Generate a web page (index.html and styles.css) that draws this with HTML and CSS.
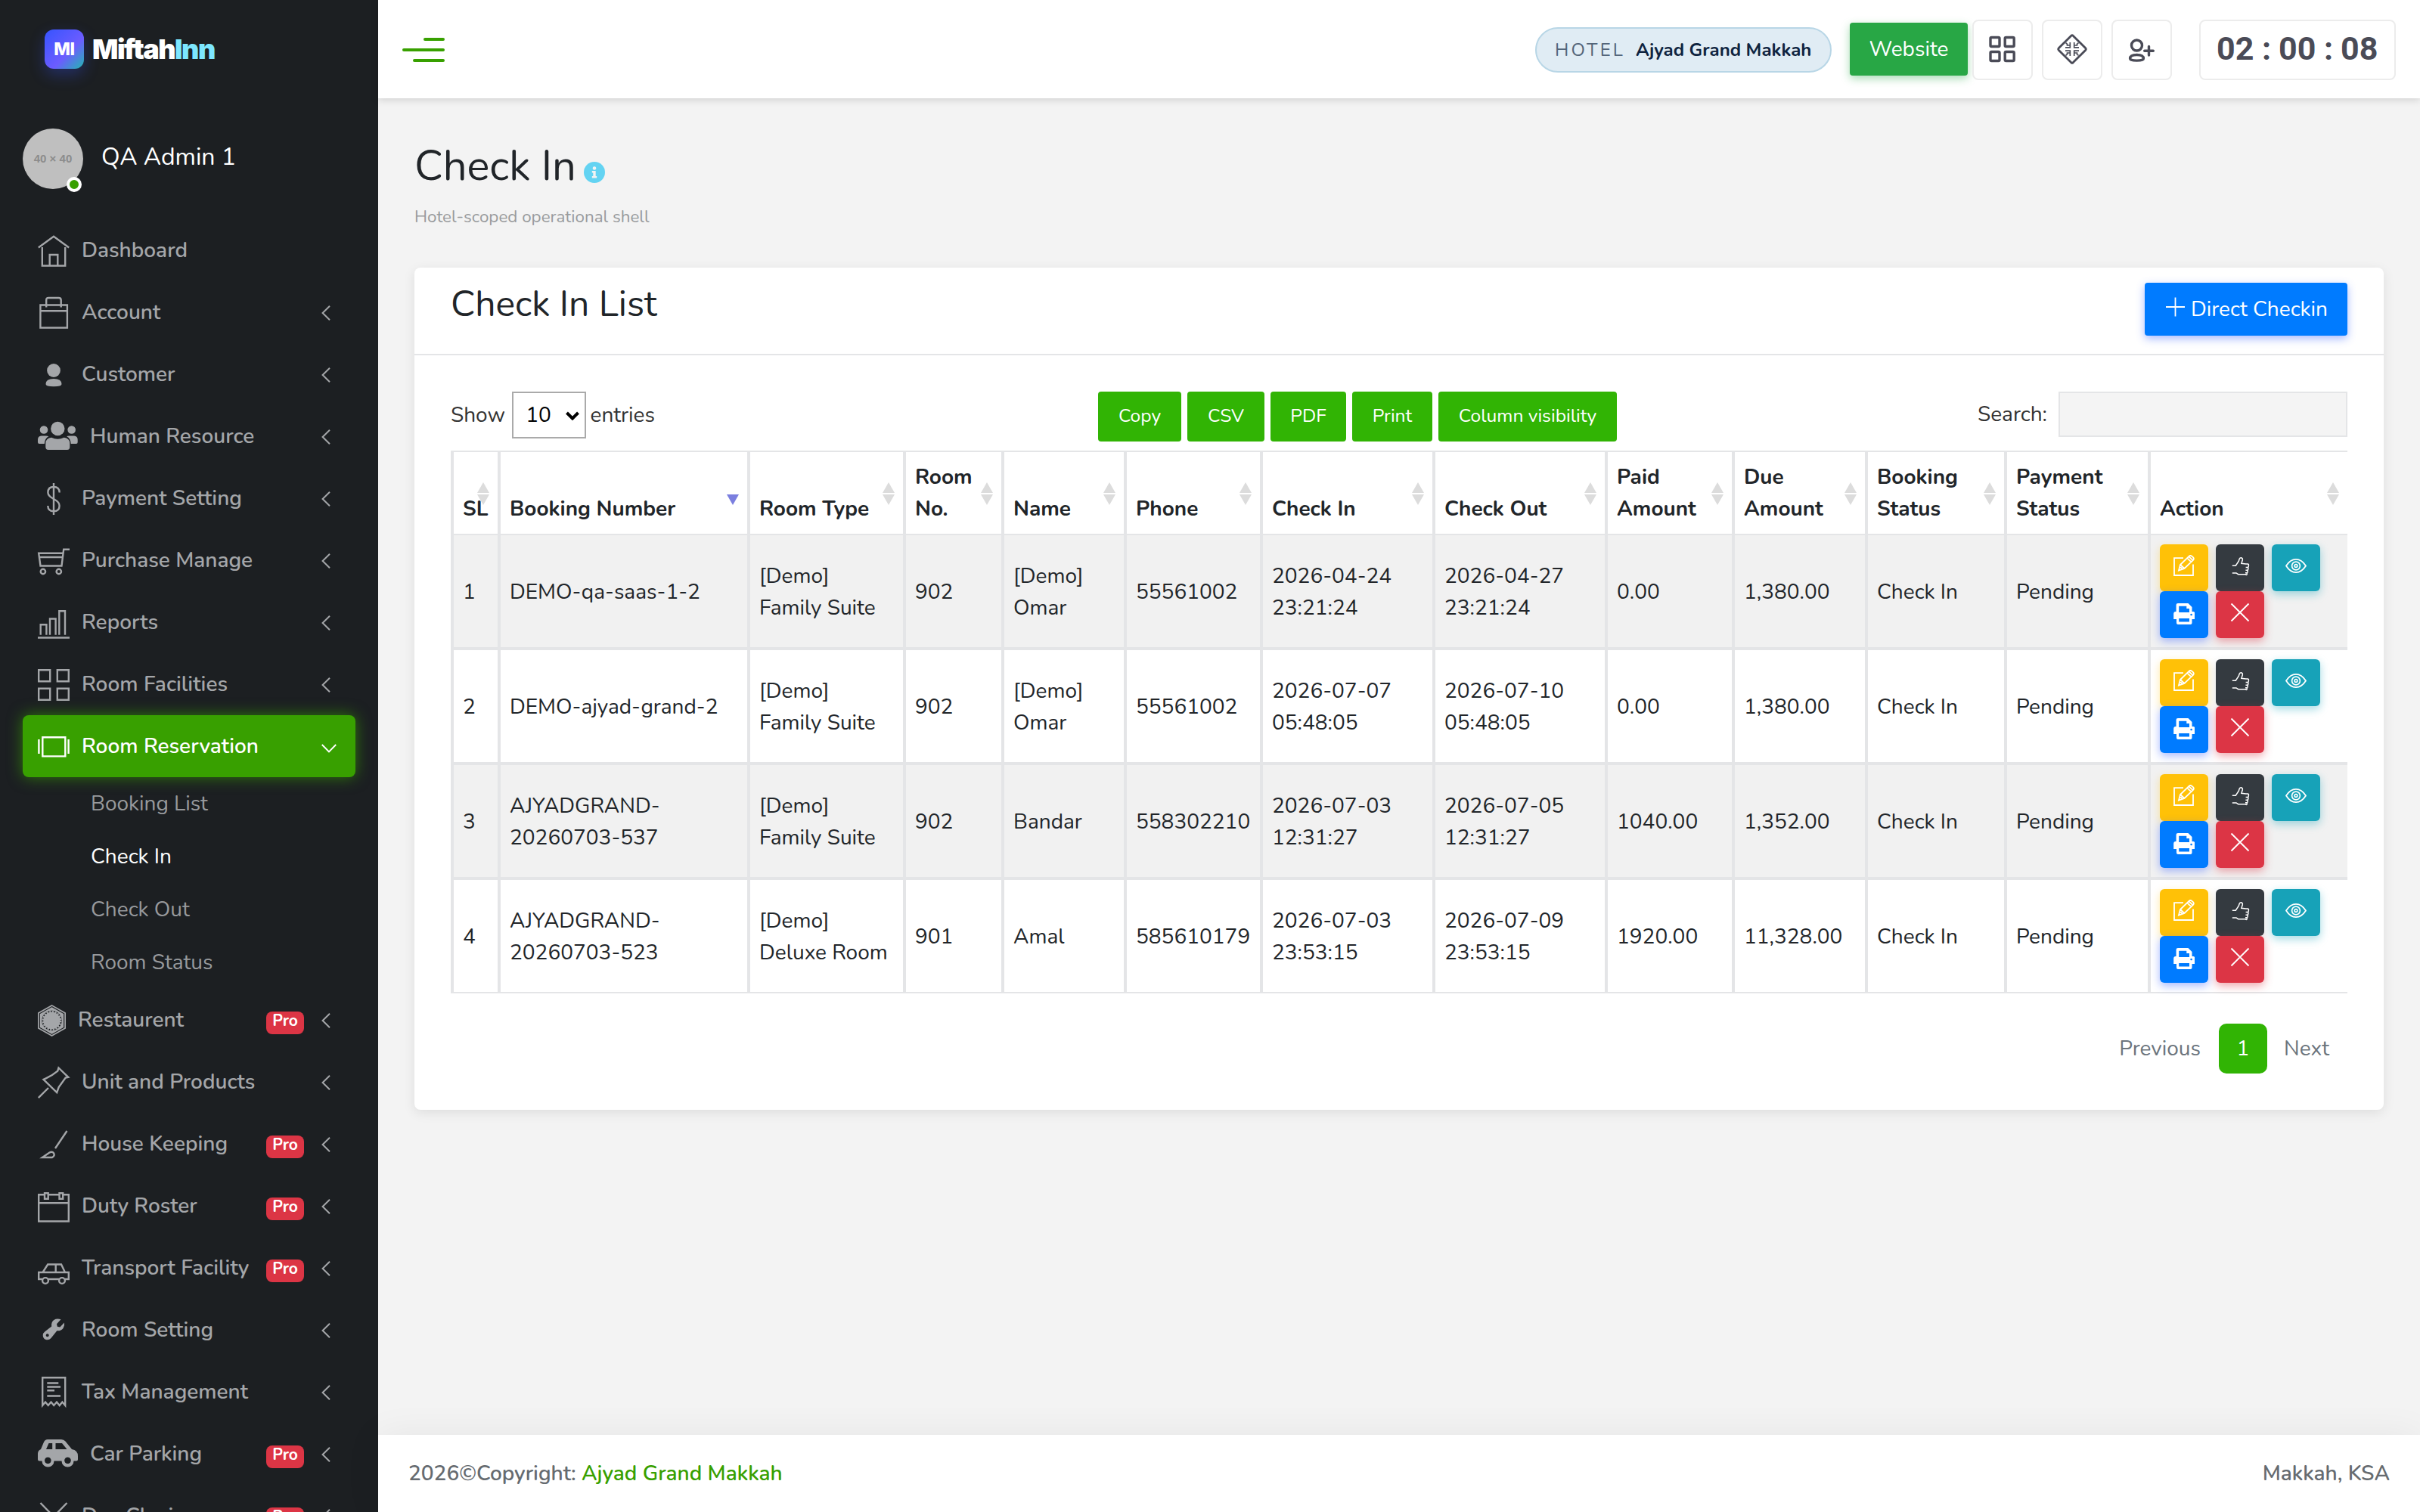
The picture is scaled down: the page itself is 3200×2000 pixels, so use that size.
FILE: index.html
```
<!DOCTYPE html>
<html lang="en">
<head>
<meta charset="utf-8">
<title>Check In</title>
<link rel="stylesheet" href="styles.css">
</head>
<body>
<svg class="sprite" aria-hidden="true">
  <symbol id="chev" viewBox="0 0 12 20"><path d="M11 .8 1.6 10 11 19.2" fill="none" stroke="currentColor" stroke-width="2"/></symbol>
  <symbol id="edit" viewBox="0 0 28 28"><path d="M13 4.2H1V27h25V12.500" fill="none" stroke="currentColor" stroke-width="1.800"/><path d="m7 20.500 2-7.500L20.500 1.800q1.700-1.500 3.600-.2l1.800 1.600q1.700 1.700.3 3.500L14.500 18zM9 13l5.500 5M18 4.200l5.500 5.200M20.500 2.300l5.300 5M8.500 15.500l3.500 3.300" fill="none" stroke="currentColor" stroke-width="1.800"/></symbol>
  <symbol id="thumb" viewBox="0 0 28 28"><path d="M3 14.500h4.500q2-3 4-6l.8-2.600Q13 4 14.700 4q2.300.3 1.800 3l-1.400 4.600 6 .6h2.200q1.800.3 1.300 2l-.2 1.600q0 1-1 1h-2.600m2.400 0q1.200.5.900 2t-1.100 1.800h-2.400m2 0q1.200.5.8 2t-1 1.500h-2.200m1.700 0q.8.500.5 1.900T20.200 26H10.800L8.200 24.200H3" fill="none" stroke="currentColor" stroke-width="1.500" transform="translate(.8 -.3)"/></symbol>
  <symbol id="eye" viewBox="0 0 28 28"><path d="M1 14.500Q6.500 5.900 14 5.900T27 14.500Q21.500 23.100 14 23.100T1 14.500z" fill="none" stroke="currentColor" stroke-width="1.800"/><circle cx="14" cy="14.500" r="5.400" fill="none" stroke="currentColor" stroke-width="1.700"/><circle cx="14" cy="14.500" r="1.900" fill="none" stroke="currentColor" stroke-width="1.600"/></symbol>
  <symbol id="print" viewBox="0 0 28 28"><path fill="currentColor" fill-rule="evenodd" d="M6 0h13.500L24.500 5v6H26q2.500.2 2.500 3v7h-4v5q0 2-2 2H6q-2 0-2-2v-5H.2v-7q0-3 2.800-3h.6V2Q3.600 0 6 0zM7.200 3.800V12H21V7h-3.700V3.800zM7.200 20v4.500H21V20zM23.600 13.700a1.300 1.300 0 1 0 .01 0z"/></symbol>
  <symbol id="cross" viewBox="0 0 28 28"><path d="M2.500 2.500l23 23m0-23-23 23" fill="none" stroke="currentColor" stroke-width="1.900"/></symbol>
  <symbol id="sort" viewBox="0 0 16 30"><path d="M8 0l8 14H0zM0 16h16L8 30z" fill="currentColor"/></symbol>
</svg>

<div class="app">
  <aside class="sidebar">
    <div class="brand">
      <span class="brand-mark">MI</span>
      <span class="brand-name">Miftah<span class="brand-accent">Inn</span></span>
    </div>
    <div class="profile">
      <div class="avatar"><span class="avatar-text">40 × 40</span><span class="status"></span></div>
      <span class="profile-name">QA Admin 1</span>
    </div>
    <nav class="menu">
      <a class="item"><svg class="ico" viewBox="0 0 42 42"><path d="M.8 16.500 21 1.800l20.200 14.700M5.800 16v24.500h30.400V16M15.700 40V26h10.600v14"/></svg>Dashboard</a>
      <a class="item"><svg class="ico" viewBox="0 0 42 42"><path d="M3.400 10.500h35.500v30H3.400zM3.400 18.300h35.500M11.200 13.500V4q0-3 3-3h13.500q3 0 3 3v9.500"/></svg>Account<svg class="chev"><use href="#chev"/></svg></a>
      <a class="item"><svg class="ico solid" viewBox="0 0 42 42"><circle cx="21" cy="15" r="8.900"/><path d="M10.500 33q0-7 10.500-7t10.500 7q0 3.300-10.500 3.300T10.500 33z"/></svg>Customer<svg class="chev"><use href="#chev"/></svg></a>
      <a class="item"><svg class="ico wide solid" viewBox="0 0 53 42"><circle cx="26.300" cy="10" r="9.200"/><circle cx="8" cy="11.500" r="5.300"/><circle cx="44.700" cy="11.500" r="5.300"/><path d="M18 21.800q8.300 4 16.600 0 7.700.8 7.700 8v4.500q0 3.700-3.500 3.700h-25q-3.500 0-3.500-3.700v-4.500q0-7.200 7.700-8zM4.500 19.500H11q2.200 0 3.300.8-5 2.500-5.500 9.700H2q-2 0-2-2v-3.500q0-4.500 4.500-5zM48 19.500h-6.500q-2.200 0-3.300.8 5 2.500 5.500 9.700h7q2 0 2-2v-3.500q0-4.500-4.700-5z"/></svg>Human Resource<svg class="chev"><use href="#chev"/></svg></a>
      <a class="item"><svg class="ico" viewBox="0 0 42 42"><path d="M21 0v42M28.700 12.500Q28.500 5 21 5t-7.600 7.300q0 4.500 6 7.700l3.200 2q6 3.300 6 8 0 7.300-7.600 7.300T13.300 30"/></svg>Payment Setting<svg class="chev"><use href="#chev"/></svg></a>
      <a class="item"><svg class="ico" viewBox="0 0 42 42"><path d="M42 5.700h-7.800L31.500 27.500h-28L1.200 10.800H33M2.200 16h30"/><circle cx="6.900" cy="35" r="3.200"/><circle cx="27.800" cy="35" r="3.200"/></svg>Purchase Manage<svg class="chev"><use href="#chev"/></svg></a>
      <a class="item"><svg class="ico" viewBox="0 0 42 42"><path d="M0 40.500h42M3.700 36.700V23.200h7.700v13.500M16 36.700V15.500h7.600v21.200M28.300 36.700V5.200H36v31.500"/></svg>Reports<svg class="chev"><use href="#chev"/></svg></a>
      <a class="item"><svg class="ico" viewBox="0 0 42 42"><path d="M1.200 1.200h15v15h-15zM25.800 1.200h15v15h-15zM1.200 25.800h15v15h-15zM25.800 25.800h15v15h-15z"/></svg>Room Facilities<svg class="chev"><use href="#chev"/></svg></a>
      <a class="item active"><svg class="ico" viewBox="0 0 42 42"><path d="M6.300 8.200h30v25.200h-30zM1.400 11v19M40.600 11v19"/></svg>Room Reservation<svg class="chev"><use href="#chev"/></svg></a>
      <div class="submenu">
        <a class="subitem">Booking List</a>
        <a class="subitem current">Check In</a>
        <a class="subitem">Check Out</a>
        <a class="subitem">Room Status</a>
      </div>
      <a class="item"><svg class="ico hex" viewBox="0 0 37 42"><path class="fill" d="M18.500 0 37 10.500v21L18.500 42 0 31.500v-21z"/><path class="cut" d="M18.500 2.600 34.700 11.800v18.400l-16.200 9.200L2.300 30.200V11.800z"/><circle class="cut" cx="18.500" cy="21" r="13.200"/><circle class="ring" cx="18.500" cy="21" r="11.200"/></svg>Restaurent<span class="pro">Pro</span><svg class="chev"><use href="#chev"/></svg></a>
      <a class="item"><svg class="ico" viewBox="0 0 42 42"><path d="M.8 41.200 14 28M27.500 1.500 40.300 13.800l-3.600.8-9 12.500-2.500 7L7.500 16.800l3.300-1.500Q20 11 26.300 5.600z"/></svg>Unit and Products<svg class="chev"><use href="#chev"/></svg></a>
      <a class="item"><svg class="ico" viewBox="0 0 42 42"><path d="M38.500 3 23 26M6 38l9.500-6.500q3.500-2 5.500.8 2 3.500-2 5.700z"/></svg>House Keeping<span class="pro">Pro</span><svg class="chev"><use href="#chev"/></svg></a>
      <a class="item"><svg class="ico" viewBox="0 0 42 42"><path d="M8 5.200H1.200v35.300h39.600V5.200H34M14.500 5.200h13M1.200 16.300h39.600M9 3.200h4.700v7.500H9zM28.500 3.200h4.700v7.500h-4.700z"/></svg>Duty Roster<span class="pro">Pro</span><svg class="chev"><use href="#chev"/></svg></a>
      <a class="item"><svg class="ico" viewBox="0 0 42 42"><path d="M6 35H1.200V26h39.600v9H36M14 35h14M6.500 26l6.700-10.500H31L36 26M23.700 15.500V26"/><circle cx="10" cy="37" r="3.900"/><circle cx="32" cy="37" r="3.900"/></svg>Transport Facility<span class="pro">Pro</span><svg class="chev"><use href="#chev"/></svg></a>
      <a class="item"><svg class="ico solid" viewBox="0 0 42 42"><path fill-rule="evenodd" d="M30.500 6.200 25 12.300l.8 3.400 3.500.8 5.700-6q.8 4-1.500 7.500-3 3.800-8.200 3.300L17.500 31q-2.800 3-6.800 2-4-1.500-4-5.800.2-3 2.500-4.700l9-7Q17.500 9.500 21.300 7t9.200-.8zM12.700 25.300a2 2 0 1 0 .01 0z"/></svg>Room Setting<svg class="chev"><use href="#chev"/></svg></a>
      <a class="item"><svg class="ico" viewBox="0 0 42 42"><path d="M6.200 38V1.200h30V38l-3.800-4.500-3.700 4.500-3.700-4.500-3.800 4.500-3.700-4.500-3.800 4.500-3.700-4.500zM12.300 8.500h15M12.300 13.500H30M12.300 18.300H22M12.300 25.500H30"/></svg>Tax Management<svg class="chev"><use href="#chev"/></svg></a>
      <a class="item"><svg class="ico wide solid" viewBox="0 0 53 42"><path fill-rule="evenodd" d="M13 1h18q3.500 0 5.500 2.500L45 14q8 1.300 8 9v4.500q0 2-2 2h-3.500a8 8 0 0 1-16 0h-10a8 8 0 0 1-16 0H2q-2 0-2-2V20q0-4.500 4-6l4-9.500Q9.500 1 13 1zM14.500 6 11 14h8.200V6zm9 0v8h15L32 6zM13.300 24.500a4.300 4.300 0 1 0 .01 0zM39.500 24.500a4.300 4.300 0 1 0 .01 0z"/></svg>Car Parking<span class="pro">Pro</span><svg class="chev"><use href="#chev"/></svg></a>
      <a class="item"><svg class="ico" viewBox="0 0 42 42"><path d="m3.500 3 35 36M38.500 3l-35 36"/></svg>Day Closing<span class="pro">Pro</span><svg class="chev"><use href="#chev"/></svg></a>
    </nav>
  </aside>

  <div class="page">
    <header class="topbar">
      <div class="burger"><span class="short"></span><span></span><span class="mid"></span></div>
      <div class="tools">
        <div class="hotel"><span class="hotel-label">HOTEL</span><span class="hotel-name">Ajyad Grand Makkah</span></div>
        <a class="website">Website</a>
        <a class="tool"><svg viewBox="0 0 40 40"><path d="M5.500 4.500h9q1.500 0 1.500 1.500v9q0 1.500-1.500 1.500h-9Q4 16.500 4 15V6q0-1.500 1.500-1.500zM24.700 4.500h9q1.500 0 1.500 1.500v9q0 1.500-1.500 1.500h-9q-1.500 0-1.500-1.500V6q0-1.500 1.500-1.500zM5.500 23.500h9q1.500 0 1.500 1.500v9q0 1.500-1.500 1.500h-9Q4 35.500 4 34v-9q0-1.500 1.500-1.500zM24.700 23.500h9q1.500 0 1.500 1.500v9q0 1.500-1.500 1.500h-9q-1.500 0-1.500-1.500v-9q0-1.500 1.500-1.500z" stroke-width="3.400"/></svg></a>
        <a class="tool"><svg viewBox="0 0 40 40"><path d="M18.800 2.200q1.200-1 2.400 0l16.600 16.600q1 1.200 0 2.400L21.200 37.800q-1.200 1-2.400 0L2.200 21.200q-1-1.200 0-2.400z" stroke-width="2.800"/><path d="M17.300 11v6.800H11M17 15h-3.500v-2.500M22.700 11v6.800H29M23 15h3.500v-2.500M17.300 29v-6.800H11M17 25h-3.500v2.500M22.700 29v-6.800H29M23 25h3.500v2.500M11.500 11.500l2.500 2.500M28.500 11.500 26 14M11.500 28.500 14 26M28.500 28.500 26 26" stroke-width="1.700"/></svg></a>
        <a class="tool"><svg viewBox="0 0 40 40"><circle cx="13.500" cy="15" r="7" stroke-width="3.400"/><path d="M4.600 32.500q0-5 8.900-5t8.900 5q0 2.600-8.900 2.600t-8.900-2.600zM29.500 16.500v11.600M23.700 22.300h11.600" stroke-width="3.400" stroke-linecap="round"/></svg></a>
        <div class="clock"><span class="num">02</span><span class="colon">:</span><span class="num">00</span><span class="colon">:</span><span class="num">08</span></div>
      </div>
    </header>

    <main class="content">
      <h1 class="title">Check In
        <svg class="info" viewBox="0 0 28 28"><circle cx="14" cy="14" r="14" fill="#63d3f2"/><path d="M14 6.200a2.300 2.300 0 1 1-.01 0zM10.800 12h4.900v7h1.500v2.400h-6.400V19h1.500v-4.600h-1.500z" fill="#f3f3f3"/></svg>
      </h1>
      <p class="subtitle">Hotel-scoped operational shell</p>

      <section class="card">
        <div class="card-head">
          <h2 class="card-title">Check In List</h2>
          <a class="direct"><svg viewBox="0 0 25 26"><path d="M12.500 .5v25M0 13h25" fill="none" stroke="currentColor" stroke-width="1.800"/></svg>Direct Checkin</a>
        </div>
        <div class="card-body">
          <div class="controls">
            <div class="length">Show <span class="select">10<svg viewBox="0 0 18 12"><path d="M1.500 2 9 9.500 16.500 2" fill="none" stroke="currentColor" stroke-width="4"/></svg></span> entries</div>
            <div class="exports"><a class="w-copy">Copy</a><a class="w-csv">CSV</a><a class="w-pdf">PDF</a><a class="w-print">Print</a><a class="w-cols">Column visibility</a></div>
            <label class="search">Search:<input type="text" aria-label="Search"></label>
          </div>
          <table class="grid">
            <colgroup><col class="c-sl"><col class="c-booking"><col class="c-type"><col class="c-room"><col class="c-name"><col class="c-phone"><col class="c-date"><col class="c-date"><col class="c-paid"><col class="c-due"><col class="c-bstatus"><col class="c-pstatus"><col class="c-action"></colgroup>
            <thead>
              <tr>
                <th><svg class="sort"><use href="#sort"/></svg><span>SL</span></th>
                <th><svg class="sort on" viewBox="0 0 16 30"><path d="M0 16h16L8 30z" fill="currentColor"/></svg>Booking Number</th>
                <th><svg class="sort"><use href="#sort"/></svg>Room Type</th>
                <th><svg class="sort"><use href="#sort"/></svg>Room<br>No.</th>
                <th><svg class="sort"><use href="#sort"/></svg>Name</th>
                <th><svg class="sort"><use href="#sort"/></svg>Phone</th>
                <th><svg class="sort"><use href="#sort"/></svg>Check In</th>
                <th><svg class="sort"><use href="#sort"/></svg>Check Out</th>
                <th><svg class="sort"><use href="#sort"/></svg>Paid<br>Amount</th>
                <th><svg class="sort"><use href="#sort"/></svg>Due<br>Amount</th>
                <th><svg class="sort"><use href="#sort"/></svg>Booking<br>Status</th>
                <th><svg class="sort"><use href="#sort"/></svg>Payment<br>Status</th>
                <th><svg class="sort"><use href="#sort"/></svg>Action</th>
              </tr>
            </thead>
            <tbody>
              <tr><td>1</td><td>DEMO-qa-saas-1-2</td><td>[Demo]<br>Family Suite</td><td>902</td><td>[Demo]<br>Omar</td><td>55561002</td><td>2026-04-24<br>23:21:24</td><td>2026-04-27<br>23:21:24</td><td>0.00</td><td>1,380.00</td><td>Check In</td><td>Pending</td>
                <td class="ops"><div class="actions"><a class="btn warning"><svg><use href="#edit"/></svg></a><a class="btn dark"><svg><use href="#thumb"/></svg></a><a class="btn teal"><svg><use href="#eye"/></svg></a><a class="btn blue"><svg><use href="#print"/></svg></a><a class="btn danger"><svg><use href="#cross"/></svg></a></div></td></tr>
              <tr><td>2</td><td>DEMO-ajyad-grand-2</td><td>[Demo]<br>Family Suite</td><td>902</td><td>[Demo]<br>Omar</td><td>55561002</td><td>2026-07-07<br>05:48:05</td><td>2026-07-10<br>05:48:05</td><td>0.00</td><td>1,380.00</td><td>Check In</td><td>Pending</td>
                <td class="ops"><div class="actions"><a class="btn warning"><svg><use href="#edit"/></svg></a><a class="btn dark"><svg><use href="#thumb"/></svg></a><a class="btn teal"><svg><use href="#eye"/></svg></a><a class="btn blue"><svg><use href="#print"/></svg></a><a class="btn danger"><svg><use href="#cross"/></svg></a></div></td></tr>
              <tr><td>3</td><td>AJYADGRAND-<br>20260703-537</td><td>[Demo]<br>Family Suite</td><td>902</td><td>Bandar</td><td>558302210</td><td>2026-07-03<br>12:31:27</td><td>2026-07-05<br>12:31:27</td><td>1040.00</td><td>1,352.00</td><td>Check In</td><td>Pending</td>
                <td class="ops"><div class="actions"><a class="btn warning"><svg><use href="#edit"/></svg></a><a class="btn dark"><svg><use href="#thumb"/></svg></a><a class="btn teal"><svg><use href="#eye"/></svg></a><a class="btn blue"><svg><use href="#print"/></svg></a><a class="btn danger"><svg><use href="#cross"/></svg></a></div></td></tr>
              <tr><td>4</td><td>AJYADGRAND-<br>20260703-523</td><td>[Demo]<br>Deluxe Room</td><td>901</td><td>Amal</td><td>585610179</td><td>2026-07-03<br>23:53:15</td><td>2026-07-09<br>23:53:15</td><td>1920.00</td><td>11,328.00</td><td>Check In</td><td>Pending</td>
                <td class="ops"><div class="actions"><a class="btn warning"><svg><use href="#edit"/></svg></a><a class="btn dark"><svg><use href="#thumb"/></svg></a><a class="btn teal"><svg><use href="#eye"/></svg></a><a class="btn blue"><svg><use href="#print"/></svg></a><a class="btn danger"><svg><use href="#cross"/></svg></a></div></td></tr>
            </tbody>
          </table>
          <div class="pager"><a class="prev">Previous</a><a class="num-page">1</a><a class="next">Next</a></div>
        </div>
      </section>
    </main>

    <footer class="footer">
      <div>2026©Copyright: <a class="footer-link">Ajyad Grand Makkah</a></div>
      <div>Makkah, KSA</div>
    </footer>
  </div>
</div>
</body>
</html>
```
FILE: styles.css
```
* { box-sizing: border-box; }
body {
  margin: 0;
  font-family: "Nunito", "Lato", sans-serif;
  font-size: 28px;
  line-height: 42px;
  color: #212529;
  background: #f3f3f3;
  overflow: hidden;
}
h1, h2, p { margin: 0; font-weight: 400; }
svg { display: block; flex: none; }
.sprite { position: absolute; width: 0; height: 0; }

.app { display: flex; width: 3200px; height: 2000px; overflow: hidden; }

/* Sidebar */
.sidebar {
  width: 500px;
  flex: none;
  overflow: hidden;
  background: #1c1f22;
  color: #a4a6a9;
}
.brand { display: flex; align-items: center; gap: 11px; height: 130px; padding-left: 59px; }
.brand-mark {
  width: 52px;
  height: 52px;
  border-radius: 12px;
  background: linear-gradient(135deg, #3654ff 0%, #6c5cff 60%, #22b8b0 100%);
  box-shadow: 0 8px 20px rgba(54, 84, 255, .3);
  color: #fff;
  font: 800 23px/52px "Inter", sans-serif;
  letter-spacing: -.3px;
  text-align: center;
}
.brand-name { font: 900 36px/52px "Inter", sans-serif; letter-spacing: -1.500px; color: #fff; }
.brand-accent { color: #7de7ff; }

.profile { display: flex; align-items: center; gap: 24px; height: 80px; margin-top: 40px; padding-left: 30px; }
.avatar {
  position: relative;
  width: 80px;
  height: 80px;
  border-radius: 50%;
  background: #bfbfbf;
  color: #8c8c8c;
  font: 700 15px/80px "Liberation Sans", sans-serif;
  text-align: center;
}
.status {
  position: absolute;
  left: 58px;
  top: 64px;
  width: 20px;
  height: 20px;
  border: 4px solid #fff;
  border-radius: 50%;
  background: #38a000;
}
.profile-name { font-size: 32px; color: #fff; margin-top: -4px; }

.menu { display: flex; flex-direction: column; padding: 40px 30px 0; }
.item {
  display: flex;
  align-items: center;
  height: 82px;
  flex: none;
  padding: 0 33px 0 20px;
  border-radius: 8px;
  font-weight: 600;
}
.ico {
  width: 42px;
  height: 42px;
  margin: 2px 16px 0 0;
  overflow: visible;
  fill: none;
  stroke: currentColor;
  stroke-width: 2.400;
}
.ico.wide { width: 53px; }
.ico.hex { width: 37px; stroke: none; }
.ico.solid { fill: currentColor; stroke: none; }
.ico .fill { fill: currentColor; }
.ico path.cut { fill: none; stroke: #1c1f22; stroke-width: 1.200; }
.ico circle.cut { fill: #1c1f22; }
.ico .ring { fill: currentColor; stroke: currentColor; stroke-width: 3.600; stroke-dasharray: 2.200 1.318; }
.chev { width: 12px; height: 20px; margin-left: auto; margin-top: 2px; }
.pro {
  width: 50px;
  height: 30px;
  margin-left: auto;
  margin-top: 8px;
  border-radius: 8px;
  background: #dc3545;
  color: #fff;
  font-size: 21px;
  font-weight: 700;
  line-height: 25px;
  text-align: center;
}
.pro + .chev { margin-left: 23px; }
.active { background: #38a000; color: #fff; box-shadow: 0 0 20px rgba(56, 160, 0, .7); }
.active .chev { transform: translate(4px, 2px) rotate(-90deg); }
.submenu { display: flex; flex-direction: column; padding-left: 90px; }
.subitem { height: 70px; line-height: 70px; color: #97999c; }
.subitem.current { color: #fff; }

/* Top bar */
.page { flex: 1; display: flex; flex-direction: column; min-width: 0; }
.topbar {
  display: flex;
  align-items: center;
  justify-content: space-between;
  height: 130px;
  flex: none;
  padding: 2px 32px 0;
  background: #fff;
  box-shadow: 0 2px 10px rgba(0, 0, 0, .15);
}
.burger { display: flex; flex-direction: column; align-items: flex-end; gap: 10px; width: 56px; }
.burger span { width: 56px; height: 4px; border-radius: 2px; background: #38a000; }
.burger .short { width: 28px; }
.burger .mid { width: 42px; }
.tools { display: flex; align-items: center; }
.hotel {
  display: flex;
  align-items: center;
  gap: 14px;
  width: 392px;
  height: 60px;
  margin-right: 24px;
  padding-left: 24px;
  border: 2px solid #b8d6e6;
  border-radius: 30px;
  background: #e0ecf4;
  font-size: 24px;
  white-space: nowrap;
}
.hotel-label { color: #536579; letter-spacing: 3.200px; }
.hotel-name { color: #0f2440; font-weight: 700; }
.website {
  width: 156px;
  height: 70px;
  margin: -2px 6px 0 0;
  border-radius: 4px;
  background: #28a745;
  box-shadow: 0 4px 12px rgba(40, 167, 69, .4);
  color: #fff;
  line-height: 70px;
  text-align: center;
}
.tool {
  display: grid;
  place-items: center;
  width: 80px;
  height: 80px;
  margin-right: 12px;
  border: 2px solid #ececec;
  border-radius: 8px;
  background: #fff;
}
.tool svg { width: 40px; height: 40px; margin-top: -2px; fill: none; stroke: #4a4b57; }
.clock {
  display: flex;
  align-items: center;
  width: 260px;
  height: 80px;
  margin-left: 24px;
  padding: 0 0 4px 21px;
  border: 2px solid #ececec;
  border-radius: 8px;
  color: #4a4b57;
  font: 700 43px/76px "Roboto", sans-serif;
}
.clock .num { width: 50px; }
.clock .colon { width: 32px; text-align: center; }

/* Content */
.content { flex: 1; padding: 56px 48px 0; }
.title { display: flex; align-items: center; gap: 10px; font-size: 56px; line-height: 67px; }
.info { width: 28px; height: 28px; margin-top: 16px; }
.subtitle { margin-top: 17px; font-size: 22.400px; line-height: 34px; color: #999b9d; }
.card { height: 1114px; margin-top: 50px; border-radius: 8px; background: #fff; box-shadow: 0 4px 16px rgba(0, 0, 0, .09); }
.card-head { display: flex; justify-content: space-between; height: 116px; padding: 20px 48px 0; border-bottom: 2px solid #e4e5e7; }
.card-title { font-size: 48px; line-height: 56px; }
.direct {
  display: flex;
  align-items: center;
  gap: 8px;
  width: 268px;
  height: 70px;
  padding-left: 28px;
  border-radius: 4px;
  background: #007bff;
  box-shadow: 0 4px 12px rgba(60, 100, 255, .45);
  color: #fff;
  white-space: nowrap;
}
.direct svg { width: 25px; height: 26px; margin-top: -6px; }
.card-body { padding: 48px 48px 0; }
.controls { display: flex; justify-content: space-between; align-items: flex-start; height: 78px; }
.length, .search { display: flex; align-items: center; color: #333; }
.length { width: 856px; height: 62px; white-space: pre; }
.select {
  display: flex;
  align-items: center;
  justify-content: space-between;
  width: 98px;
  height: 62px;
  margin: 0 -2px 0 2px;
  padding: 0 7px 0 16px;
  border: 2px solid #aaa;
  color: #000;
}
.select svg { width: 18px; height: 12px; margin-top: 1px; }
.exports { display: flex; gap: 8px; }
.exports a {
  height: 66px;
  border-radius: 4px;
  background: #31b404;
  color: #fff;
  font-size: 24.640px;
  line-height: 64px;
  text-align: center;
}
.exports .w-copy { width: 110px; }
.exports .w-csv { width: 102px; }
.exports .w-pdf { width: 100px; }
.exports .w-print { width: 106px; }
.exports .w-cols { width: 236px; }
.search { flex: 1; justify-content: flex-end; gap: 15px; height: 60px; line-height: 56px; }
.search input { width: 382px; height: 60px; padding: 0; border: 2px solid #e4e5e7; background: #f4f4f4; }

.grid { table-layout: fixed; width: 2508px; border-collapse: separate; border-spacing: 0; }
.c-sl { width: 62px; }
.c-booking { width: 330px; }
.c-type { width: 206px; }
.c-room { width: 130px; }
.c-name { width: 162px; }
.c-phone { width: 180px; }
.c-date { width: 228px; }
.c-paid { width: 168px; }
.c-due { width: 176px; }
.c-bstatus { width: 184px; }
.c-pstatus { width: 190px; }
.c-action { width: 264px; }
.grid th, .grid td { padding: 0 0 0 12px; border-left: 4px solid #e4e5e7; text-align: left; white-space: nowrap; }
.grid th {
  position: relative;
  height: 112px;
  padding-bottom: 12px;
  border-top: 2px solid #e4e5e7;
  border-bottom: 2px solid #e4e5e7;
  vertical-align: bottom;
  font-weight: 700;
}
.grid th span { position: relative; }
.grid td { height: 152px; padding-top: 1px; border-bottom: 4px solid #e4e5e7; vertical-align: middle; }
.grid td.ops { padding-top: 0; }
.grid tbody tr:last-child td { height: 150px; border-bottom-width: 2px; }
.grid tbody tr:nth-child(odd) td { background: #f1f1f1; }
.sort { position: absolute; right: 11px; top: 40px; width: 16px; height: 30px; color: #dcdcdc; }
.sort.on { color: #7b7fdf; }
.actions { display: grid; grid-template-columns: repeat(3, 64px); column-gap: 10px; }
.btn { display: grid; place-items: center; height: 62px; border-radius: 6px; color: #fff; }
.btn svg { width: 28px; height: 28px; margin-top: -6px; overflow: visible; }
.btn.blue svg { margin-top: -2px; }
.warning { background: #ffc107; box-shadow: 0 4px 12px rgba(255, 193, 7, .35); }
.dark { background: #343a40; box-shadow: 0 4px 12px rgba(52, 58, 64, .15); }
.teal { background: #17a2b8; box-shadow: 0 4px 12px rgba(23, 162, 184, .4); }
.blue { background: #007bff; box-shadow: 0 4px 12px rgba(60, 100, 255, .45); }
.danger { background: #dc3545; box-shadow: 0 4px 12px rgba(220, 53, 69, .45); }

.pager { display: flex; justify-content: flex-end; margin-top: 40px; line-height: 66px; color: #6c757d; }
.prev { padding-right: 24px; }
.num-page { width: 64px; height: 66px; border-radius: 10px; background: #31b404; color: #fff; text-align: center; }
.next { padding: 0 24px 0 22px; }

.footer {
  display: flex;
  align-items: center;
  justify-content: space-between;
  height: 102px;
  flex: none;
  padding: 0 40px;
  background: #fff;
  box-shadow: 0 0 50px rgba(0, 0, 0, .06);
  color: #666b70;
  font-weight: 600;
}
.footer-link { color: #38a000; }
```
